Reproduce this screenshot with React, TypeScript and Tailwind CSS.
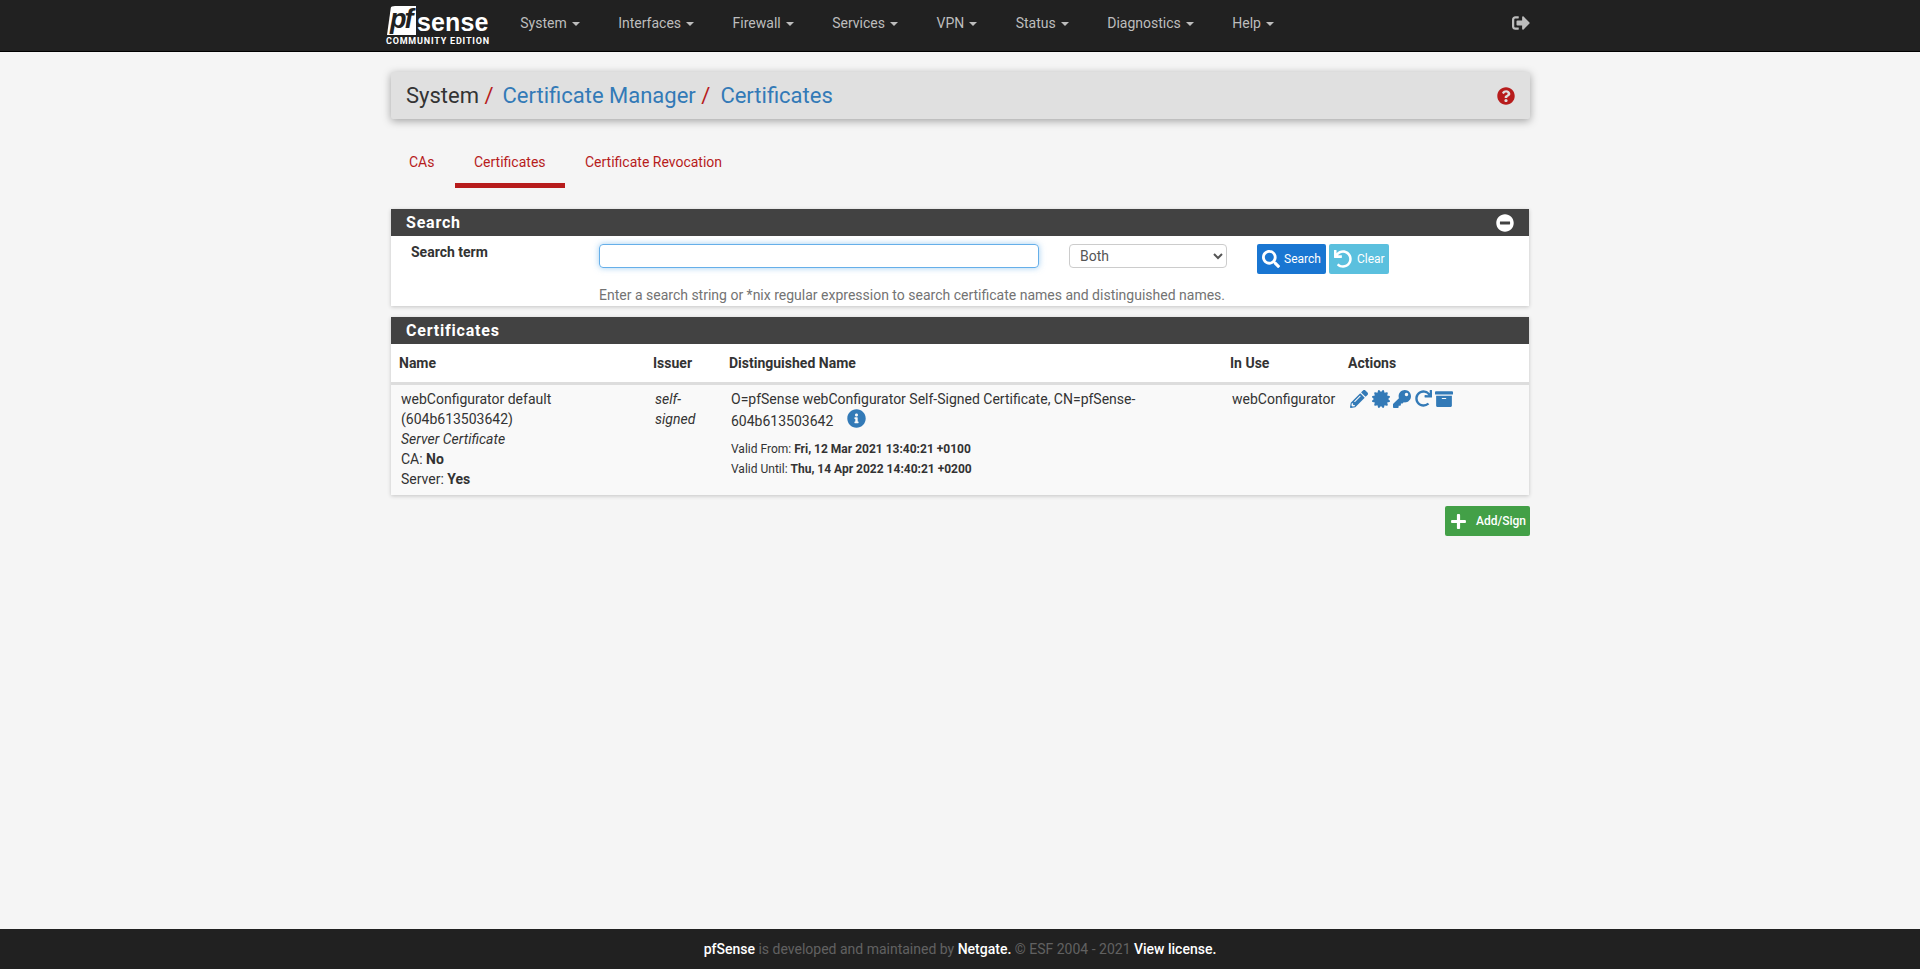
import { FaArchive, FaCertificate, FaInfoCircle, FaKey, FaMinusCircle, FaPencilAlt, FaPlus, FaQuestionCircle, FaRedo, FaSearch, FaSignOutAlt, FaUndo } from "react-icons/fa";

const menu = ["System", "Interfaces", "Firewall", "Services", "VPN", "Status", "Diagnostics", "Help"];

function Caret() {
  return <span className="ml-[5px] inline-block align-middle border-x-[4px] border-t-[4px] border-x-transparent border-t-[#bdbdbd]" />;
}

function Logo() {
  return (
    <div className="w-[116px] h-[51px] pl-[2px] pt-[6px] flex flex-col text-white select-none">
      <div className="flex items-center h-[29px]">
        <span className="h-[29px] w-[29px] bg-white text-[#212121] rounded-tl-[8px] font-['Liberation_Sans',sans-serif] italic font-bold text-[27px] leading-[27px] tracking-[-2px] pl-[3px] [clip-path:polygon(14%_0,100%_0,100%_100%,0_100%)]">
          pf
        </span>
        <span className="ml-[1px] mt-[3px] font-['Liberation_Sans',sans-serif] font-bold text-[25px] leading-[26px] tracking-[0.1px]">sense</span>
      </div>
      <div className="mt-[1px] text-[9px] leading-[10px] font-bold tracking-[0.8px] -ml-[1px] whitespace-nowrap">COMMUNITY EDITION</div>
    </div>
  );
}

function PanelTitle({ title, toggle }: { title: string; toggle?: boolean }) {
  return (
    <div className="h-[27px] bg-[#424242] text-white flex items-center justify-between pl-[15px] pr-[15px]">
      <span className="text-[16px] font-bold tracking-[0.8px]">{title}</span>
      {toggle && <FaMinusCircle className="text-[18px]" />}
    </div>
  );
}

export default function App() {
  return (
    <div className="h-screen flex flex-col bg-[#f5f5f5] text-[#333] text-[14px] leading-[20px] font-['Roboto',sans-serif]">
      <nav className="h-[52px] shrink-0 bg-[#212121] border-b border-black">
        <div className="mx-auto w-[1170px] pl-[10px] pr-[15px] flex items-center justify-between">
          <div className="flex items-center">
            <Logo />
            {menu.map((m) => (
              <a key={m} className="mb-[5px] px-[19.25px] text-[14px] text-[#bdbdbd] whitespace-nowrap">
                {m}
                <Caret />
              </a>
            ))}
          </div>
          <FaSignOutAlt className="mb-[5px] text-[18px] text-[#bdbdbd]" />
        </div>
      </nav>

      <main className="mx-auto w-[1140px] flex-1">
        <div className="mt-[20px] h-[47px] ml-[1px] bg-[#e0e0e0] rounded-[2px] shadow-[0_2px_8px_rgba(0,0,0,0.35)] flex items-center justify-between pl-[15px] pr-[15px] text-[22px]">
          <div className="whitespace-nowrap">
            <span className="text-[#333]">System</span>
            <span className="text-[#b71c1c]"> /</span>
            <a className="ml-[9px] text-[#337ab7]">Certificate Manager</a>
            <span className="text-[#b71c1c]"> /</span>
            <a className="ml-[10px] text-[#337ab7]">Certificates</a>
          </div>
          <FaQuestionCircle className="text-[18px] text-[#b71c1c]" />
        </div>

        <div className="mt-[22px] ml-[1px] flex h-[47px] text-[#b71c1c]">
          <a className="pl-[18px] w-[64px] pt-[11px]">CAs</a>
          <a className="pl-[19px] pt-[11px] w-[110px] border-b-[5px] border-[#b71c1c]">Certificates</a>
          <a className="pl-[20px] pt-[11px]">Certificate Revocation</a>
        </div>

        <section className="mt-[21px] mx-[1px] shadow-[0_1px_4px_rgba(0,0,0,0.2)] bg-white">
          <PanelTitle title="Search" toggle />
          <div className="h-[70px] pt-[8px]">
            <div className="flex items-start">
              <label className="w-[208px] pl-[20px] font-bold leading-[17px] mt-[0px]">Search term</label>
              <input className="w-[440px] h-[24px] rounded-[4px] border border-[#66afe9] shadow-[0_0_6px_rgba(102,175,233,0.6)] outline-none" />
              <select className="ml-[30px] w-[158px] h-[24px] rounded-[4px] border border-[#ccc] bg-white text-[#555] pl-[6px] text-[14px]">
                <option>Both</option>
              </select>
              <button className="ml-[30px] w-[69px] h-[30px] rounded-[2px] bg-[#1976d2] text-white text-[12px] flex items-center pl-[5px] gap-[4px]">
                <FaSearch className="text-[18px]" />
                Search
              </button>
              <button className="ml-[3px] w-[60px] h-[30px] rounded-[2px] bg-[#5bc0de] text-white text-[12px] flex items-center pl-[5px] gap-[5px]">
                <FaUndo className="text-[18px]" />
                Clear
              </button>
            </div>
            <p className="mt-[11px] ml-[208px] text-[14px] text-[#737373]">Enter a search string or *nix regular expression to search certificate names and distinguished names.</p>
          </div>
        </section>

        <section className="mt-[11px] mx-[1px] shadow-[0_1px_4px_rgba(0,0,0,0.2)] bg-white">
          <PanelTitle title="Certificates" />
          <table className="w-full table-fixed border-collapse">
            <colgroup>
              <col className="w-[254px]" />
              <col className="w-[76px]" />
              <col className="w-[501px]" />
              <col className="w-[118px]" />
              <col />
            </colgroup>
            <thead>
              <tr className="h-[39px] border-b-[3px] border-[#ddd] text-left font-bold">
                <th className="pl-[8px]">Name</th>
                <th className="pl-[8px]">Issuer</th>
                <th className="pl-[8px]">Distinguished Name</th>
                <th className="pl-[8px]">In Use</th>
                <th className="pl-[8px]">Actions</th>
              </tr>
            </thead>
            <tbody>
              <tr className="h-[112px] bg-[#f9f9f9] align-top">
                <td className="pl-[10px] pr-[8px] pt-[4px]">
                  webConfigurator default (604b613503642)
                  <br />
                  <i>Server Certificate</i>
                  <br />
                  CA: <b>No</b>
                  <br />
                  Server: <b>Yes</b>
                </td>
                <td className="pl-[10px] pr-[8px] pt-[4px] italic">self-signed</td>
                <td className="pl-[10px] pr-[8px] pt-[4px]">
                  <div>
                    O=pfSense webConfigurator Self-Signed Certificate, CN=pfSense-604b613503642
                    <FaInfoCircle className="inline-block ml-[14px] text-[19px] align-[-2px] text-[#337ab7]" />
                  </div>
                  <div className="mt-[8px] text-[12px]">
                    Valid From: <b>Fri, 12 Mar 2021 13:40:21 +0100</b>
                    <br />
                    Valid Until: <b>Thu, 14 Apr 2022 14:40:21 +0200</b>
                  </div>
                </td>
                <td className="pl-[10px] pt-[4px]">webConfigurator</td>
                <td className="pl-[10px] pt-[5px]">
                  <div className="flex items-center gap-[3.5px] text-[18px] text-[#337ab7]">
                    <FaPencilAlt />
                    <FaCertificate />
                    <FaKey />
                    <FaRedo className="text-[17px]" />
                    <FaArchive />
                  </div>
                </td>
              </tr>
            </tbody>
          </table>
        </section>

        <div className="mt-[11px] flex justify-end">
          <button className="w-[85px] h-[30px] rounded-[2px] bg-[#43a047] text-white text-[12px] font-medium flex items-center pl-[5px] gap-[9px]">
            <FaPlus className="text-[17px]" />
            Add/Sign
          </button>
        </div>
      </main>

      <footer className="h-[40px] shrink-0 pb-[1px] bg-[#212121] text-[#616161] flex items-center justify-center">
        <p>
          <b className="font-medium text-white">pfSense</b> is developed and maintained by <b className="font-medium text-white">Netgate.</b> © ESF 2004 - 2021 <b className="font-medium text-white">View license.</b>
        </p>
      </footer>
    </div>
  );
}
